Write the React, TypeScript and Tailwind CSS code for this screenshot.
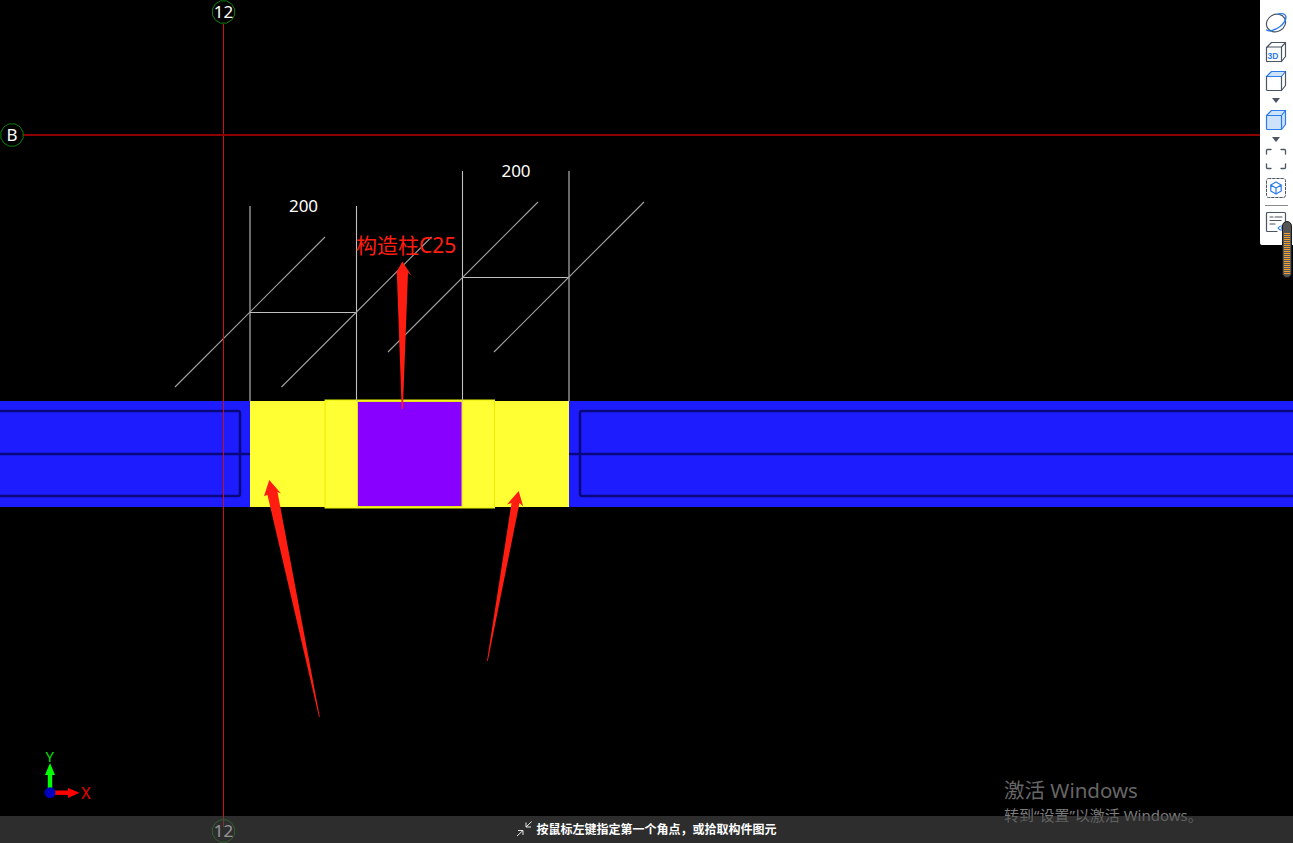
const whiteLines = [
  [250, 206, 250, 401],
  [356.5, 206, 356.5, 401],
  [462.5, 171, 462.5, 401],
  [569, 171, 569, 401],
  [250, 312.5, 356.5, 312.5],
  [462.5, 277.5, 569, 277.5],
];

const diagonals = [
  [175, 387, 325, 237],
  [281.5, 387, 431.5, 237],
  [388, 352, 538, 202],
  [494, 352, 644, 202],
];

const arrows = [
  "402.3,261.5 411.5,275.5 408,272.5 402.9,409 401.7,409 396.8,272.5 394.7,275.5",
  "269.3,480 281,493.5 277.5,492 319.8,717 319,717 267.5,495 264,496",
  "518.7,491 523.2,506.5 519.5,503 487.8,661 487,661 511.5,503 507,504.5",
];

const bubblePoints = (cx: number, cy: number, r: number) =>
  Array.from({ length: 12 }, (_, i) => {
    const a = (Math.PI / 6) * i + Math.PI / 12;
    return `${(cx + r * Math.cos(a)).toFixed(1)},${(cy + r * Math.sin(a)).toFixed(1)}`;
  }).join(" ");

function Bubble({ x, y, label }: { x: number; y: number; label: string }) {
  return (
    <g>
      <polygon points={bubblePoints(x, y, 11.5)} fill="none" stroke="#088008" strokeWidth="1" />
      <text x={x} y={y + 6} textAnchor="middle" fontSize="17" fill="#ffffff">
        {label}
      </text>
    </g>
  );
}

function Canvas() {
  return (
    <svg
      className="absolute inset-0 font-['Noto_Sans','Noto_Sans_CJK_SC',sans-serif]"
      width="1293"
      height="843"
      viewBox="0 0 1293 843"
    >
      <rect x="0" y="401" width="1293" height="106" fill="#1c1cff" />
      <g fill="none" stroke="#08087c" strokeWidth="2.4">
        <rect x="-10" y="411" width="250" height="85" rx="2" />
        <rect x="580" y="411" width="730" height="85" rx="2" />
        <path d="M0 454H250M569 454H1293" />
      </g>
      <rect x="250" y="401" width="319" height="106" fill="#ffff33" />
      <rect x="325" y="400" width="169.5" height="108" fill="#ffff33" stroke="#e6f000" strokeWidth="1" />
      <rect x="357.5" y="401.5" width="104.5" height="105" fill="#8800ff" stroke="#e6e020" strokeWidth="1" />

      <g stroke="#c0c0c0" strokeWidth="1.1">
        {whiteLines.map(([x1, y1, x2, y2], i) => (
          <line key={i} x1={x1} y1={y1} x2={x2} y2={y2} />
        ))}
      </g>
      <g stroke="#a0a0a0" strokeWidth="1.15">
        {diagonals.map(([x1, y1, x2, y2], i) => (
          <line key={i} x1={x1} y1={y1} x2={x2} y2={y2} />
        ))}
      </g>

      <line x1="223.5" y1="24" x2="223.5" y2="827" stroke="#cc1010" strokeWidth="1" />
      <line x1="23" y1="135" x2="1262" y2="135" stroke="#8c0000" strokeWidth="2" />
      <Bubble x={223.5} y={12} label="12" />
      <Bubble x={12} y={135} label="B" />
      <Bubble x={223.5} y={831} label="12" />

      <text x="303.5" y="212" textAnchor="middle" fontSize="17" fill="#ffffff">200</text>
      <text x="516" y="177" textAnchor="middle" fontSize="17" fill="#ffffff">200</text>
      <text x="356" y="253" fontSize="21" fill="#ff1d12">构造柱C25</text>

      <g fill="#ff1d12">
        {arrows.map((p) => (
          <polygon key={p} points={p} />
        ))}
      </g>

      <rect x="47.8" y="773" width="4.4" height="16" fill="#00ff00" />
      <polygon points="50,763 55,775 45,775" fill="#00ff00" />
      <rect x="52" y="790.5" width="17" height="4.4" fill="#ff0000" />
      <polygon points="79.5,792.7 68,788 68,798" fill="#ff0000" />
      <circle cx="50" cy="792.7" r="5.5" fill="#0000c0" />
      <text x="49.8" y="762" textAnchor="middle" fontSize="15" fill="#00e000">Y</text>
      <text x="86" y="799" textAnchor="middle" fontSize="16" fill="#f00000">X</text>
    </svg>
  );
}

const grey = "#4b5563";
const blue = "#2b7de9";

function Caret() {
  return (
    <svg className="-my-[1px] shrink-0" width="8" height="5" viewBox="0 0 8 5">
      <polygon points="0,0 8,0 4,5" fill="#4b5563" />
    </svg>
  );
}

function ToolIcon({ children }: { children: React.ReactNode }) {
  return (
    <svg className="shrink-0" width="22" height="22" viewBox="0 0 22 22" fill="none" strokeLinejoin="round" strokeLinecap="round">
      {children}
    </svg>
  );
}

function Toolbar() {
  return (
    <div className="absolute top-0 right-0 w-[33px] h-[245px] bg-white rounded-bl-[2px] flex flex-col items-center pt-[12px] pr-[1px] gap-[7px]">
      <ToolIcon>
        <ellipse cx="11" cy="11" rx="9.8" ry="8.6" transform="rotate(-28 11 11)" stroke={grey} strokeWidth="1.2" />
        <path d="M1.6 18C4 20 10 18.2 14.8 14.8C18.8 12 21.4 7.5 20.8 4.4C20.3 2 17.5 1 13.5 2" stroke={blue} strokeWidth="1.4" />
      </ToolIcon>
      <ToolIcon>
        <path d="M2.5 6H16.5V20.5H3A1 1 0 0 1 1.5 19.5V7ZM1.5 6.5L6.5 1.5H20.5V15.5L16.5 20.5M16.5 6L20.5 1.5" stroke={grey} strokeWidth="1.2" />
        <text x="2.6" y="17.5" fontSize="8.5" fontWeight="700" fill={blue} className="font-['Liberation_Sans',sans-serif]">3D</text>
      </ToolIcon>
      <ToolIcon>
        <path d="M1.5 6.5L6.5 1.5H20.5L16.5 6.5Z" fill="#cfe2fb" stroke={blue} strokeWidth="1.2" />
        <path d="M1.5 6.5V19.5A1 1 0 0 0 2.5 20.5H16.5V6.5M16.5 20.5L20.5 15.5V1.5" stroke={grey} strokeWidth="1.2" />
      </ToolIcon>
      <Caret />
      <ToolIcon>
        <path d="M1.5 6.5L6.5 1.5H20.5V15.5L16.5 20.5H2.5A1 1 0 0 1 1.5 19.5Z" fill="#cfe2fb" stroke={blue} strokeWidth="1.2" />
        <path d="M1.5 6.5H16.5V20.5M16.5 6.5L20.5 1.5" stroke={blue} strokeWidth="1.2" />
      </ToolIcon>
      <Caret />
      <ToolIcon>
        <path d="M1.5 6V2.5A1 1 0 0 1 2.5 1.5H6M16 1.5H19.5A1 1 0 0 1 20.5 2.5V6M20.5 16V19.5A1 1 0 0 1 19.5 20.5H16M6 20.5H2.5A1 1 0 0 1 1.5 19.5V16" stroke={grey} strokeWidth="1.3" />
      </ToolIcon>
      <ToolIcon>
        <rect x="1.5" y="1.5" width="19" height="19" rx="2" stroke={grey} strokeWidth="1" strokeDasharray="2.5 1.6" />
        <path d="M11 5L16.2 8V14L11 17L5.8 14V8ZM5.8 8L11 11L16.2 8M11 11V17" stroke={blue} strokeWidth="1.2" />
      </ToolIcon>
      <div className="w-[23px] h-px bg-[#8b8b8b] shrink-0 -mt-[1px] -mb-[2px]" />
      <ToolIcon>
        <path d="M12 20.5H2.5A1 1 0 0 1 1.5 19.5V2.5A1 1 0 0 1 2.5 1.5H19.5A1 1 0 0 1 20.5 2.5V12" stroke={grey} strokeWidth="1.2" />
        <path d="M5 6H8M10 6H17M5 9.5H16M5 13H10" stroke={grey} strokeWidth="1.1" />
        <path d="M13 17C15 14 20 14 22 17C20 20 15 20 13 17Z" fill="#ffffff" stroke={blue} strokeWidth="1.2" />
        <circle cx="17.5" cy="17" r="1.4" fill={blue} />
      </ToolIcon>
    </div>
  );
}

function Scroller() {
  return (
    <div className="absolute top-[221px] left-[1282px] w-[10px] h-[57px] rounded-[5px] bg-[#555555] border border-[#1c1c1c] flex flex-col gap-[1px] px-[1px] pt-[11px] overflow-hidden">
      {Array.from({ length: 21 }, (_, i) => (
        <div key={i} className="h-px shrink-0 bg-[#f0a030]" />
      ))}
    </div>
  );
}

export default function App() {
  return (
    <div className="relative h-[843px] w-[1293px] overflow-hidden bg-black flex flex-col justify-end font-['Noto_Sans','Noto_Sans_CJK_SC',sans-serif]">
      <Canvas />
      <Toolbar />
      <Scroller />
      <div className="absolute left-[1004px] top-[777px] text-[#666666]">
        <div className="text-[20.5px] leading-[27px]">激活 Windows</div>
        <div className="text-[15px] leading-[20px] mt-[1px] text-[#7d7d7d]">转到“设置”以激活 Windows。</div>
      </div>
      <div className="relative h-[27px] pb-[2px] bg-[#4b4b4b]/60 flex items-center justify-center gap-[3px] text-white text-[12px] font-bold font-['Noto_Sans_CJK_SC',sans-serif]">
        <svg width="17" height="16" viewBox="0 0 17 16" fill="none" stroke="#e8e8e8" strokeWidth="1">
          <path d="M15.7 0.5L10 6M10 1.5V6H15M1 15L7 9.5M2 9.5H7V14" />
        </svg>
        <span>按鼠标左键指定第一个角点，或拾取构件图元</span>
      </div>
    </div>
  );
}
